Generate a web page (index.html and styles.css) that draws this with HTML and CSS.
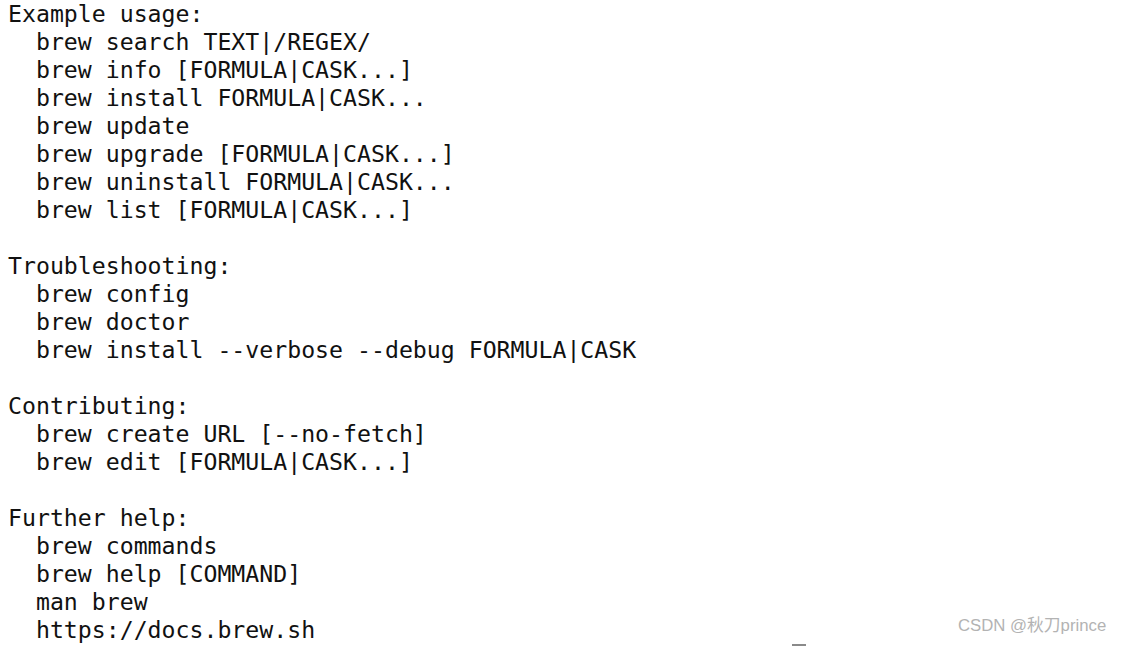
FILE: index.html
```html
<!DOCTYPE html>
<html>
<head>
<meta charset="utf-8">
<link rel="stylesheet" href="styles.css">
</head>
<body>
<main class="terminal">
<pre class="output">Example usage:
  brew search TEXT|/REGEX/
  brew info [FORMULA|CASK...]
  brew install FORMULA|CASK...
  brew update
  brew upgrade [FORMULA|CASK...]
  brew uninstall FORMULA|CASK...
  brew list [FORMULA|CASK...]

Troubleshooting:
  brew config
  brew doctor
  brew install --verbose --debug FORMULA|CASK

Contributing:
  brew create URL [--no-fetch]
  brew edit [FORMULA|CASK...]

Further help:
  brew commands
  brew help [COMMAND]
  man brew
  https://docs.brew.sh</pre>
<span class="cursor"></span>
<span class="watermark">CSDN @秋刀prince</span>
</main>
</body>
</html>
```

FILE: styles.css
```css
html, body {
  margin: 0;
  padding: 0;
  background: #ffffff;
}
.terminal {
  position: relative;
  width: 1122px;
  height: 646px;
  overflow: hidden;
}
.output {
  margin: 0;
  padding: 0 0 0 8px;
  font-family: "DejaVu Sans Mono", monospace;
  font-size: 23.2px;
  line-height: 28px;
  color: #111111;
  white-space: pre;
}
.cursor {
  position: absolute;
  left: 792px;
  top: 644px;
  width: 14px;
  height: 2px;
  background: #8a8a8a;
}
.watermark {
  position: absolute;
  left: 958px;
  top: 616px;
  font-family: "Liberation Sans", "Noto Sans CJK SC", sans-serif;
  font-size: 16.75px;
  line-height: 20px;
  color: #b3b3b3;
  white-space: nowrap;
}
```
